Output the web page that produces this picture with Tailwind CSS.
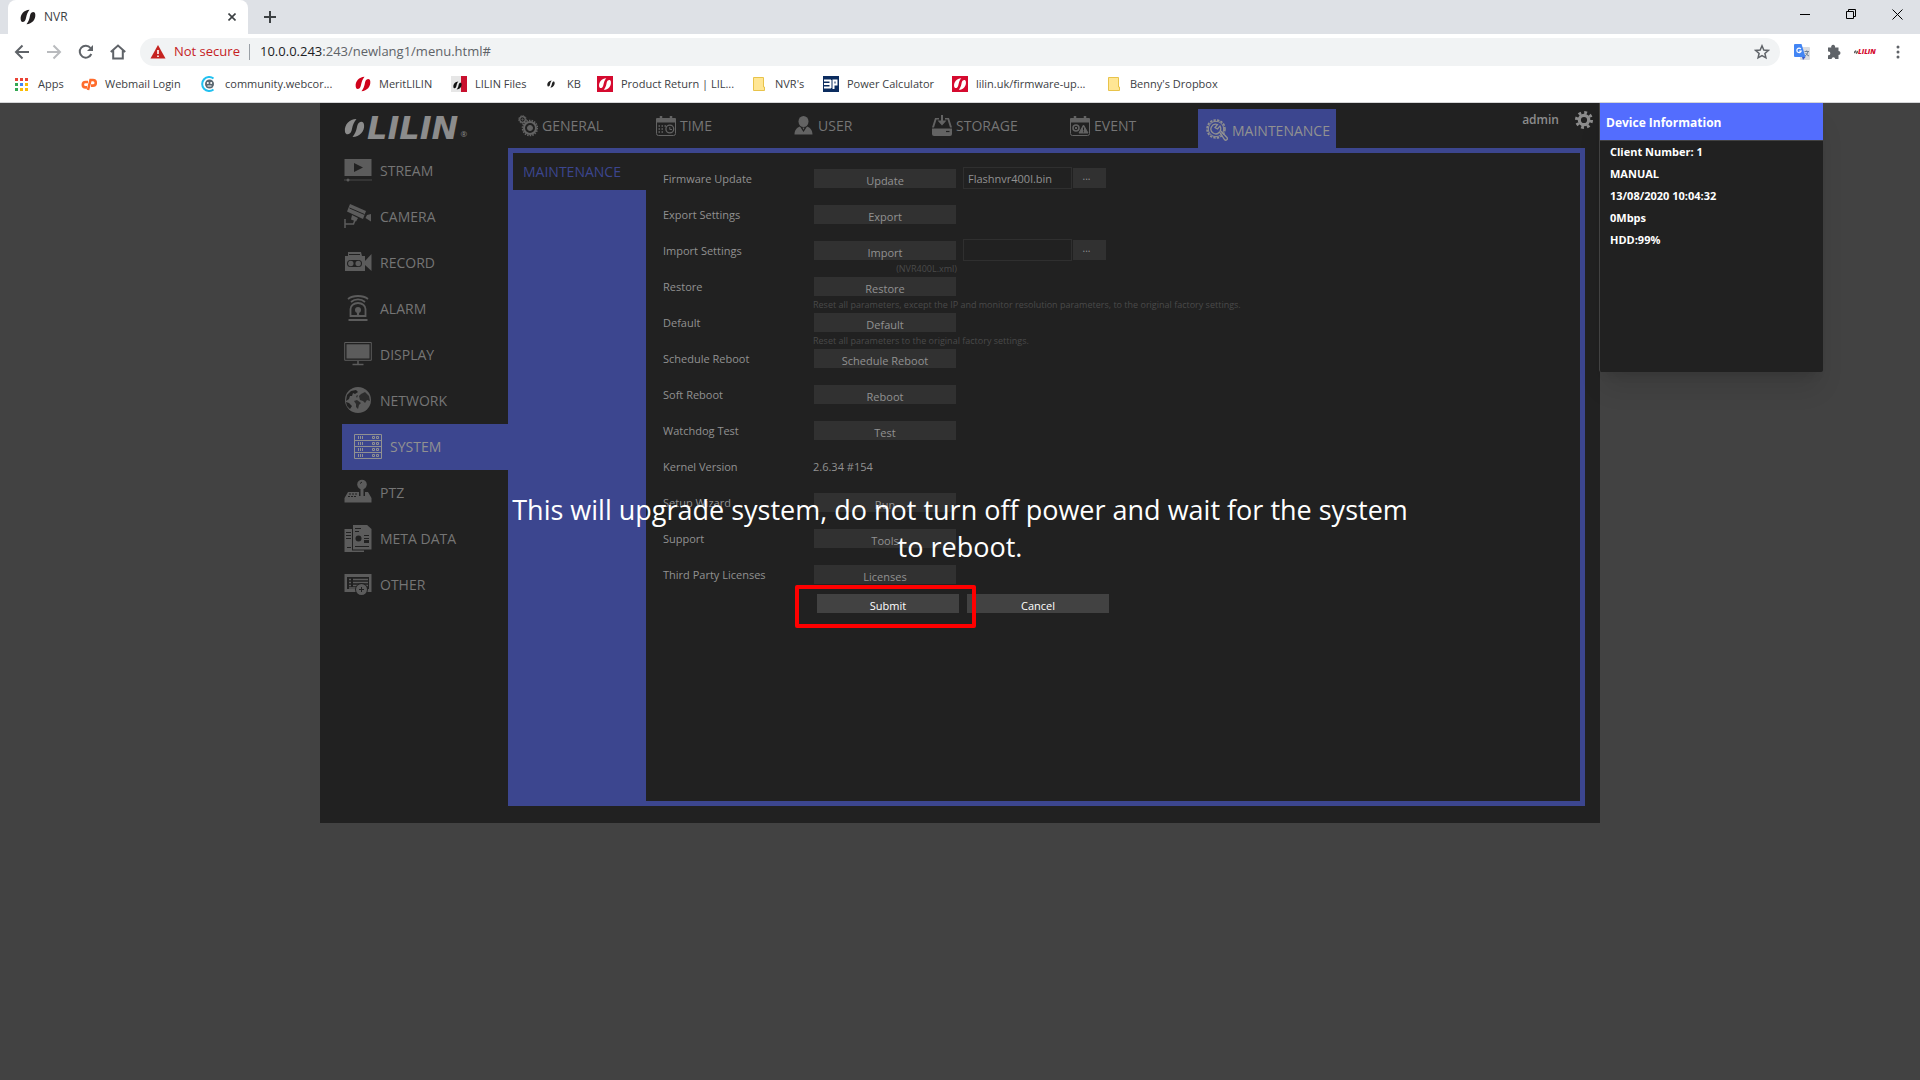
<!DOCTYPE html>
<html lang="en">
<head>
    <meta charset="UTF-8">
    <meta name="viewport" content="width=device-width, initial-scale=1.0">
    <title>NVR</title>

    <!-- Tailwind CSS -->
    <script src="https://cdn.jsdelivr.net/npm/@tailwindcss/browser@4"></script>
</head>
<body class="flex flex-col min-h-screen bg-[#424242] font-['Open_Sans',sans-serif] text-xs">

    <!-- Shared logo mark -->
    <svg class="hidden">
        <symbol id="swirl" viewBox="0 0 16 16">
            <path d="M9.5 .8C4 1 .2 5.500 .7 10.500C1 13.300 3 13.500 4.600 12.200C6.800 10.300 5.300 6 9.500 .8Z" />
            <path d="M6.500 15.200C12 15 15.800 10.500 15.300 5.500C15 2.700 13 2.500 11.400 3.800C9.200 5.700 10.700 10 6.500 15.200Z" />
        </symbol>
    </svg>

    <!-- Browser window -->
    <header class="bg-white text-[#3c4043] border-b border-[#d5d6d8]">
        <!-- Tab strip -->
        <div class="flex items-end h-[34px] pl-2 bg-[#dee1e6]">
            <div class="flex items-center w-60 h-[34px] px-3 bg-white rounded-t-lg">
                <svg class="w-4 h-4" fill="#231f20"><use href="#swirl" /></svg>
                <span class="ml-2 text-xs">NVR</span>
                <button class="ml-auto" aria-label="Close tab">
                    <svg class="w-2 h-2" viewBox="0 0 8 8" fill="none" stroke="#3c4043" stroke-width="1.6"><path d="M.5 .5L7.500 7.500M7.500 .5L.5 7.500" /></svg>
                </button>
            </div>
            <button class="flex items-center justify-center w-11 h-[34px]" aria-label="New tab">
                <svg class="w-3 h-3" viewBox="0 0 12 12" stroke="#3c4043" stroke-width="2"><path d="M6 0V12M0 6H12" /></svg>
            </button>
            <div class="flex items-center h-[28px] mb-1.5 ml-auto">
                <button class="flex justify-center w-[46px]" aria-label="Minimize">
                    <svg class="w-[10px] h-[11px]" viewBox="0 0 10 11" stroke="#000"><path d="M0 5.500H10" /></svg>
                </button>
                <button class="flex justify-center w-[46px]" aria-label="Restore">
                    <svg class="w-[10px] h-[11px]" viewBox="0 0 10 11" fill="none" stroke="#000"><path d="M.5 2.500H7.500V9.500H.5ZM2.500 2.500V.5H9.500V7.500H7.500" /></svg>
                </button>
                <button class="flex justify-center w-[46px]" aria-label="Close">
                    <svg class="w-[11px] h-[11px]" viewBox="0 0 11 11" stroke="#000"><path d="M.5 .5L10.500 10.500M10.500 .5L.5 10.500" /></svg>
                </button>
            </div>
        </div>

        <!-- Toolbar -->
        <div class="flex items-center h-9 px-3.5">
            <div class="flex items-center gap-4 w-[126px] shrink-0">
                <button aria-label="Back"><svg class="w-4 h-4" viewBox="0 0 16 16" fill="none" stroke="#5f6368" stroke-width="2"><path d="M15 8H2M8.500 1.500L2 8L8.500 14.500" /></svg></button>
                <button aria-label="Forward"><svg class="w-4 h-4" viewBox="0 0 16 16" fill="none" stroke="#b9bbbe" stroke-width="2"><path d="M1 8H14M7.500 1.500L14 8L7.500 14.500" /></svg></button>
                <button aria-label="Reload"><svg class="w-4 h-4" viewBox="0 0 16 16"><path d="M13.300 10A6 6 0 1 1 12.500 4" fill="none" stroke="#5f6368" stroke-width="2" /><path d="M15 1V7H9Z" fill="#5f6368" /></svg></button>
                <button aria-label="Home"><svg class="w-4 h-4" viewBox="0 0 16 16" fill="none" stroke="#5f6368" stroke-width="2"><path d="M.8 8L8 1.500L15.200 8M3.200 6.500V14.500H12.800V6.500" /></svg></button>
            </div>
            <div class="flex items-center grow h-7 px-2.5 bg-[#f1f3f4] rounded-full text-[13px]">
                <svg class="w-4 h-4" viewBox="0 0 16 16"><path d="M8 1L15.500 14.500H.5Z" fill="#c5221f" /><path d="M8 6V10M8 11.500V13" stroke="#fff" stroke-width="1.600" /></svg>
                <span class="w-[83px] pl-2 text-[#c5221f] whitespace-nowrap">Not secure</span>
                <span class="w-px h-4 mr-2.5 bg-[#9aa0a6]"></span>
                <span class="text-[#5f6368]"><span class="text-[#202124]">10.0.0.243</span>:243/newlang1/menu.html#</span>
                <button class="ml-auto" aria-label="Bookmark this page">
                    <svg class="w-4 h-4" viewBox="0 0 16 16" fill="none" stroke="#5f6368" stroke-width="1.500"><path d="M8 1.800L9.800 6L14.300 6.400L10.900 9.400L11.900 13.800L8 11.500L4.100 13.800L5.100 9.400L1.700 6.400L6.200 6Z" /></svg>
                </button>
            </div>
            <div class="flex items-center gap-4 pl-3.5">
                <svg class="w-4 h-4" viewBox="0 0 16 16"><rect x="6" y="3" width="10" height="13" rx="1" fill="#dadce0" /><path d="M1 0H7.500L11.500 13H1A1 1 0 0 1 0 12V1A1 1 0 0 1 1 0Z" fill="#4285f4" /><path d="M8 13H11.500L9 16Z" fill="#3a5bc7" /><path d="M6.800 5A2.200 2.200 0 1 0 7.200 7H5.200" fill="none" stroke="#fff" stroke-width="1.200" /><path d="M10.500 7.500H15M12.700 6.500V7.500M14 7.500C13.500 10 12 11.500 11 12M11.700 9C12.500 10.500 13.500 11.500 15 12" fill="none" stroke="#6b7f94" /></svg>
                <svg class="w-4 h-4" viewBox="0 0 16 16" fill="#5f6368"><path d="M2 3.500H5.300A2 2 0 1 1 9 3.500H12.500V7A2 2 0 1 1 12.500 11V15H9.200A1.800 1.800 0 1 0 5.600 15H2V11.200A1.900 1.900 0 1 0 2 7.500Z" /></svg>
                <span class="flex items-center w-6 -mx-1 text-[7px] font-extrabold italic text-[#d50a2f]"><svg class="w-1 h-1" fill="#333"><use href="#swirl" /></svg>LILIN</span>
                <button aria-label="Menu"><svg class="w-4 h-4" viewBox="0 0 16 16" fill="#5f6368"><circle cx="8" cy="3" r="1.500" /><circle cx="8" cy="8" r="1.500" /><circle cx="8" cy="13" r="1.500" /></svg></button>
            </div>
        </div>

        <!-- Bookmarks bar -->
        <nav class="flex items-center h-8 pl-3.5 pb-1 text-[11px] whitespace-nowrap">
            <a href="#" class="flex items-center gap-2 w-[67px]">
                <svg class="w-4 h-4" viewBox="0 0 16 16"><path d="M1 2H4V5H1ZM6 2H9V5H6ZM11 2H14V5H11Z" fill="#ea4335" /><path d="M1 7H4V10H1ZM1 12H4V15H1Z" fill="#34a853" /><path d="M6 7H9V10H6Z" fill="#4285f4" /><path d="M11 7H14V10H11ZM6 12H9V15H6ZM11 12H14V15H11Z" fill="#fbbc04" /></svg>
                Apps
            </a>
            <a href="#" class="flex items-center gap-2 w-[120px]">
                <svg class="w-4 h-4" viewBox="0 0 16 16" fill="none" stroke="#ff6c2c" stroke-width="2.600"><path d="M7 6H4.500A2.700 2.700 0 0 0 4.500 11.400H6M7 14L9.500 4H12A2.600 2.600 0 0 1 12 9.600H10" /></svg>
                Webmail Login
            </a>
            <a href="#" class="flex items-center gap-2 w-[154px]">
                <svg class="w-4 h-4" viewBox="0 0 16 16"><path d="M12.500 2.500A7 7 0 1 0 12.500 13.500" fill="none" stroke="#21c0f0" stroke-width="2" /><circle cx="8.500" cy="8" r="4.500" fill="#5b6770" /><circle cx="6.800" cy="7" r="1" fill="#fff" /><circle cx="10.200" cy="7" r="1" fill="#fff" /><path d="M6.500 10H10.500" stroke="#fff" /></svg>
                community.webcor...
            </a>
            <a href="#" class="flex items-center gap-2 w-24">
                <svg class="w-4 h-4" fill="#d0021b"><use href="#swirl" /></svg>
                MeritLILIN
            </a>
            <a href="#" class="flex items-center gap-2 w-[92px]">
                <svg class="w-4 h-4" viewBox="0 0 16 16"><rect width="16" height="16" fill="#e6e6e6" /><path d="M10 0H16V16H10Z" fill="#c8102e" /><use href="#swirl" x="2" y="5" width="9" height="9" fill="#111" /></svg>
                LILIN Files
            </a>
            <a href="#" class="flex items-center gap-2 w-[54px]">
                <svg class="w-4 h-4" viewBox="0 0 16 16"><use href="#swirl" x="4" y="4" width="8" height="8" fill="#222" /></svg>
                KB
            </a>
            <a href="#" class="flex items-center gap-2 w-[154px]">
                <svg class="w-4 h-4" viewBox="0 0 16 16"><rect width="16" height="16" fill="#d50a2f" /><use href="#swirl" x="1.500" y="1.500" width="13" height="13" fill="#fff" /></svg>
                Product Return | LIL...
            </a>
            <a href="#" class="flex items-center gap-2 w-[72px]">
                <svg class="w-4 h-4" viewBox="0 0 16 16"><path d="M2.500 1.500H12.500V11H13.500V14.500H2.500Z" fill="#ffe694" stroke="#e8c34a" /></svg>
                NVR's
            </a>
            <a href="#" class="flex items-center gap-2 w-[129px]">
                <svg class="w-4 h-4" viewBox="0 0 16 16"><rect width="16" height="16" fill="#0b2c5f" /><path d="M1 4.500H8M1 8H7M1 11.500H8M7.500 4V12M10.500 13V4.500H13.500V8.500H10.500" fill="none" stroke="#fff" stroke-width="2" /></svg>
                Power Calculator
            </a>
            <a href="#" class="flex items-center gap-2 w-[154px]">
                <svg class="w-4 h-4" viewBox="0 0 16 16"><rect width="16" height="16" fill="#d50a2f" /><use href="#swirl" x="1.500" y="1.500" width="13" height="13" fill="#fff" /></svg>
                lilin.uk/firmware-up...
            </a>
            <a href="#" class="flex items-center gap-2">
                <svg class="w-4 h-4" viewBox="0 0 16 16"><path d="M2.500 1.500H12.500V11H13.500V14.500H2.500Z" fill="#ffe694" stroke="#e8c34a" /></svg>
                Benny's Dropbox
            </a>
        </nav>
    </header>

    <!-- NVR menu -->
    <main class="relative w-full max-w-[1280px] min-h-[720px] mx-auto bg-[#212121] text-[#757575]">

        <!-- Logo, top menu and user -->
        <div class="flex h-[45px] pr-[7px]">
            <div class="flex items-center gap-0.5 w-[188px] h-[45px] pl-6 pt-1 text-[#8c8c8c] shrink-0">
                <svg class="w-[21px] h-5" viewBox="0 0 16 16" preserveAspectRatio="none" fill="currentColor"><use href="#swirl" /></svg>
                <span class="font-['DejaVu_Sans',sans-serif] text-[32px] leading-8 font-bold italic">LILIN</span>
                <span class="self-end pb-2 text-[8px]">®</span>
            </div>
            <nav class="flex items-start text-sm">
                <a href="#" class="flex items-center gap-1 w-[138px] h-[45px] pl-2.5">
                    <svg class="w-5 h-[22px]" viewBox="0 0 20 22" fill="none" stroke="#636363"><circle cx="4.500" cy="4.500" r="3.800" stroke-dasharray="1.600 .9" /><circle cx="4.500" cy="4.500" r="2.800" stroke-width="1.300" /><circle cx="4.500" cy="4.500" r=".6" /><circle cx="12" cy="13" r="7.500" stroke-dasharray="1.500 1.120" stroke-width="1.600" /><circle cx="12" cy="13" r="6" stroke-width="2" /><circle cx="12" cy="13" r="2.500" fill="#636363" /></svg>
                    GENERAL
                </a>
                <a href="#" class="flex items-center gap-1 w-[138px] h-[45px] pl-2.5">
                    <svg class="w-5 h-[22px]" viewBox="0 0 20 22" fill="none" stroke="#636363"><path d="M.5 3.500H19.500V18.500A2 2 0 0 1 17.500 20.500H2.500A2 2 0 0 1 .5 18.500Z" /><path d="M1 4H19V7H1Z" fill="#636363" /><path d="M5 1V5M15 1V5" stroke-width="2.500" /><path d="M2.500 11H4M5.500 11H7M2.500 14H4M5.500 14H7M2.500 17H4M5.500 17H7M8.500 11H10" stroke-width="1.600" /><circle cx="13.800" cy="14" r="3.900" stroke-width="1.300" /><path d="M13.800 12V14.500H16" /></svg>
                    TIME
                </a>
                <a href="#" class="flex items-center gap-1 w-[138px] h-[45px] pl-2.5">
                    <svg class="w-5 h-[22px]" viewBox="0 0 20 22" fill="#636363"><ellipse cx="9.500" cy="6.500" rx="5" ry="5.500" /><path d="M.5 19.500C.5 15 3 12.500 6 11.500L9.500 17L13 11.500C16 12.500 18.500 15 18.500 19.500Z" /><path d="M8.500 12.500H10.500L9.500 15Z" /></svg>
                    USER
                </a>
                <a href="#" class="flex items-center gap-1 w-[138px] h-[45px] pl-2.5">
                    <svg class="w-5 h-[22px]" viewBox="0 0 20 22" fill="#636363"><path d="M0 13.500H20V19A2 2 0 0 1 18 21H2A2 2 0 0 1 0 19Z" /><path d="M3 3H7V4.500H4.500L2 12.500H0ZM17 3H13V4.500H15.500L18 12.500H20Z" /><path d="M9 0H11V5.500H14.500L10 10.500L5.500 5.500H9Z" /><path d="M14 16.500H17.500" stroke="#212121" stroke-width="1.200" /></svg>
                    STORAGE
                </a>
                <a href="#" class="flex items-center gap-1 w-[128px] h-[45px] pl-2.5">
                    <svg class="w-5 h-[22px]" viewBox="0 0 20 22" fill="none" stroke="#636363"><path d="M.5 3.500H19.500V18.500A2 2 0 0 1 17.500 20.500H2.500A2 2 0 0 1 .5 18.500Z" /><path d="M1 4H19V7H1Z" fill="#636363" /><path d="M5 1V5M15 1V5" stroke-width="2.500" /><circle cx="6" cy="13" r="3" stroke-width="1.500" /><path d="M4.800 11.800L7.200 14.200M7.200 11.800L4.800 14.200" /><path d="M13.500 10L18 18H9Z" fill="#636363" /><path d="M13.500 12.500V15.500M13.500 16.300V17.300" stroke="#212121" /></svg>
                    EVENT
                </a>
                <a href="#" class="flex items-center gap-1 w-[138px] h-[39px] mt-1.5 ml-2.5 pl-2 pt-1 bg-[#3c468f] text-[#919191]">
                    <svg class="w-[22px] h-[23px]" viewBox="0 0 22 23" fill="none" stroke="#919191"><circle cx="10" cy="10" r="9" stroke-width="1.600" stroke-dasharray="2.400 1.200" /><circle cx="10" cy="10" r="7.700" stroke-width="1" /><path d="M11.500 5.500A4.800 4.800 0 1 0 13.500 13L18.500 20.500A1.500 1.500 0 0 0 21 18.500L14.300 11.500A4.800 4.800 0 0 0 14 7L11.500 10L9 8.500Z" stroke-width="1.300" /></svg>
                    MAINTENANCE
                </a>
            </nav>
            <div class="flex items-center gap-4 h-[34px] ml-auto text-[#8c8c8c] font-semibold">
                <span>admin</span>
                <button aria-label="Settings">
                    <svg class="w-[18px] h-[18px]" viewBox="0 0 18 18" fill="none" stroke="#8c8c8c"><circle cx="9" cy="9" r="7.500" stroke-width="3" stroke-dasharray="2.800 3.090" /><circle cx="9" cy="9" r="4.700" stroke-width="3.200" /></svg>
                </button>
            </div>
        </div>

        <div class="flex pr-[15px] pb-[17px]">
            <!-- Sidebar -->
            <nav class="w-[188px] pl-[22px] text-sm shrink-0">
                <a href="#" class="flex items-center gap-2 h-[46px] pl-0.5">
                    <svg class="w-7 h-7" viewBox="0 0 28 28" fill="#5c5c5c"><path d="M.5 2H27.500V19H.5Z" /><path d="M10 6V15L19 10.500Z" fill="#212121" /><path d="M0 23H28" stroke="#4a4a4a" /><circle cx="4" cy="23" r="1.500" /></svg>
                    STREAM
                </a>
                <a href="#" class="flex items-center gap-2 h-[46px] pl-0.5">
                    <svg class="w-7 h-7" viewBox="0 0 28 28" fill="#5c5c5c"><path d="M6 1L22 8L19 16L3 8.500Z" /><path d="M5.500 5L20.500 11.500" stroke="#212121" /><path d="M23 12L27 11V18.500L21.500 15Z" /><path d="M8 12L14 15L12 18.500L7 16.500Z" /><path d="M1 16V25M1 21H9.500L11 17" fill="none" stroke="#5c5c5c" stroke-width="1.500" /></svg>
                    CAMERA
                </a>
                <a href="#" class="flex items-center gap-2 h-[46px] pl-0.5">
                    <svg class="w-7 h-7" viewBox="0 0 28 28" fill="#5c5c5c"><path d="M1 7H4V3H17L18 7H21V22H1Z" /><path d="M5 5.500H16" stroke="#212121" /><path d="M21 12L27.500 5V22L21 16Z" /><rect x="3" y="11" width="15" height="7" rx="3.500" fill="#212121" /><circle cx="6.800" cy="14.500" r="2.700" /><circle cx="14.200" cy="14.500" r="2.700" /></svg>
                    RECORD
                </a>
                <a href="#" class="flex items-center gap-2 h-[46px] pl-0.5">
                    <svg class="w-7 h-7" viewBox="0 0 28 28" fill="none" stroke="#5c5c5c" stroke-width="1.800"><path d="M4 4C9 0 19 0 24 4M7 7C11 3.500 17 3.500 21 7" /><path d="M6.500 21V14A7.500 6 0 0 1 21.500 14V21Z" /><circle cx="14" cy="15" r="3" fill="#5c5c5c" stroke="none" /><path d="M14 16V21M4.500 25H23.500" stroke-width="2.200" /></svg>
                    ALARM
                </a>
                <a href="#" class="flex items-center gap-2 h-[46px] pl-0.5">
                    <svg class="w-7 h-7" viewBox="0 0 28 28"><path d="M.7 1.500H27.300V19.300H.7Z" fill="none" stroke="#5c5c5c" /><path d="M2.500 3.300H25.500V17.500H2.500Z" fill="#5c5c5c" /><path d="M14 20V23M8.500 23.500H19.500" stroke="#5c5c5c" stroke-width="1.500" /></svg>
                    DISPLAY
                </a>
                <a href="#" class="flex items-center gap-2 h-[46px] pl-0.5">
                    <svg class="w-7 h-7" viewBox="0 0 28 28"><circle cx="14" cy="13" r="13" fill="#5c5c5c" /><path d="M3 8L7 4L12 3L14 5L11 7L9 6L8 9L6 9L5 12L2 14ZM2 15L5 16L8 19L6 22L3 19Z" fill="#212121" /><path d="M15 9L17 7L21 5L25 9L26 14L23 13L21 16L19 14L16 13ZM10 14L13 13L17 16L15 18L14 22L12 20L12 17ZM12 9L14 8L13 11Z" fill="#212121" opacity=".8" /></svg>
                    NETWORK
                </a>
                <a href="#" class="flex items-center gap-2 h-[46px] pl-3 bg-[#3c468f] text-[#919191]">
                    <svg class="w-7 h-[26px]" viewBox="0 0 28 26" fill="none" stroke="#919191"><path d="M.5 .5H27.500V24.500H.5ZM.5 6.500H27.500M.5 12.500H27.500M.5 18.500H27.500" /><path d="M4.500 2V5M6.500 2V5M8.500 2V5M4.500 8V11M6.500 8V11M8.500 8V11M4.500 14V17M6.500 14V17M8.500 14V17M4.500 20V23M6.500 20V23M8.500 20V23" /><path d="M18.500 2.500H20.500V4.500H18.500ZM22.500 2.500H24.500V4.500H22.500ZM18.500 8.500H20.500V10.500H18.500ZM22.500 8.500H24.500V10.500H22.500ZM18.500 14.500H20.500V16.500H18.500ZM22.500 14.500H24.500V16.500H22.500ZM18.500 20.500H20.500V22.500H18.500ZM22.500 20.500H24.500V22.500H22.500Z" /></svg>
                    SYSTEM
                </a>
                <a href="#" class="flex items-center gap-2 h-[46px] pl-0.5">
                    <svg class="w-7 h-7" viewBox="0 0 28 28" fill="#5c5c5c"><circle cx="18" cy="5.500" r="4.800" /><path d="M16.500 8H19.500V17H16.500Z" /><path d="M4 13H15V17H21V13H24L27.500 19V23.500H.5V19Z" /><path d="M5 15H13M4 17.500H13" stroke="#212121" stroke-dasharray="2 1" /><path d="M16 4.500L18 3" stroke="#212121" /></svg>
                    PTZ
                </a>
                <a href="#" class="flex items-center gap-2 h-[46px] pl-0.5">
                    <svg class="w-7 h-7" viewBox="0 0 28 28" fill="#5c5c5c"><path d="M.5 4H8V25.500H20V27H.5Z" /><path d="M9 -1H22L27.500 4V24.500H9Z" /><path d="M2 7.500H7M2 10.500H7M2 13.500H7M3 22.500H7M11 3.500H17M11 6.500H15M11 21.500H25M20 10.500H25M20 13.500H25" stroke="#212121" /><path d="M20 15H25V18H20Z" fill="#212121" /><circle cx="14.500" cy="13.500" r="3" fill="#212121" /></svg>
                    META DATA
                </a>
                <a href="#" class="flex items-center gap-2 h-[46px] pl-0.5">
                    <svg class="w-7 h-7" viewBox="0 0 28 28" fill="#5c5c5c"><path d="M.5 3H27.500V21H.5Z" /><path d="M3 6H25V18H3Z" fill="#212121" /><path d="M5 8.500H7M9 8.500H24M5 11.500H7M9 11.500H24M5 14.500H7M9 14.500H24M5 17H15" stroke="#5c5c5c" stroke-width="1.500" /><circle cx="17.500" cy="18.500" r="6.500" fill="#212121" /><circle cx="17.500" cy="18.500" r="5.500" /><path d="M17.500 16V21M15 18.500H20" stroke="#212121" /></svg>
                    OTHER
                </a>
            </nav>

            <!-- Maintenance page -->
            <section class="flex grow min-h-[658px] border-5 border-[#3c468f]">
                <nav class="w-[133px] bg-[#3c468f] shrink-0">
                    <a href="#" class="flex items-center h-[37px] pl-2.5 bg-[#212121] text-[#3c468f] text-sm">MAINTENANCE</a>
                </nav>
                <form class="grow pt-3.5 pl-[17px] text-[#919191] text-[11px]">
                    <div class="flex h-9">
                        <label for="update" class="w-[150px] leading-6">Firmware Update</label>
                        <div class="flex items-center h-[22px]">
                            <button type="button" id="update" class="w-[143px] h-[19px] pt-1 leading-[15px] border-l border-[#212121] bg-[#313131]">Update</button>
                            <input type="text" aria-label="Firmware file" value="Flashnvr400l.bin" class="w-[109px] h-[22px] ml-[7px] px-1 border border-[#2f2f2f]">
                            <button type="button" aria-label="Browse firmware file" class="w-[33px] h-5 ml-px pr-1.5 pb-1 leading-3 bg-[#313131] text-[10px]">...</button>
                        </div>
                    </div>
                    <div class="flex h-9">
                        <label for="export" class="w-[150px] leading-6">Export Settings</label>
                        <div class="flex items-center h-[22px]">
                            <button type="button" id="export" class="w-[143px] h-[19px] pt-1 leading-[15px] border-l border-[#212121] bg-[#313131]">Export</button>
                        </div>
                    </div>
                    <div class="flex h-9">
                        <label for="import" class="w-[150px] leading-6">Import Settings</label>
                        <div>
                            <div class="flex items-center h-[22px]">
                                <button type="button" id="import" class="w-[143px] h-[19px] pt-1 leading-[15px] border-l border-[#212121] bg-[#313131]">Import</button>
                                <input type="text" aria-label="Settings file" class="w-[109px] h-[22px] ml-[7px] px-1 border border-[#2f2f2f]">
                                <button type="button" aria-label="Browse settings file" class="w-[33px] h-5 ml-px pr-1.5 pb-1 leading-3 bg-[#313131] text-[10px]">...</button>
                            </div>
                            <p class="w-36 text-right text-[9px] leading-4 text-[#4a4a4a]">(NVR400L.xml)</p>
                        </div>
                    </div>
                    <div class="flex h-9">
                        <label for="restore" class="w-[150px] leading-6">Restore</label>
                        <div>
                            <div class="flex items-center h-[22px]">
                                <button type="button" id="restore" class="w-[143px] h-[19px] pt-1 leading-[15px] border-l border-[#212121] bg-[#313131]">Restore</button>
                            </div>
                            <p class="text-[9px] leading-4 text-[#4a4a4a]">Reset all parameters, except the IP and monitor resolution parameters, to the original factory settings.</p>
                        </div>
                    </div>
                    <div class="flex h-9">
                        <label for="default" class="w-[150px] leading-6">Default</label>
                        <div>
                            <div class="flex items-center h-[22px]">
                                <button type="button" id="default" class="w-[143px] h-[19px] pt-1 leading-[15px] border-l border-[#212121] bg-[#313131]">Default</button>
                            </div>
                            <p class="text-[9px] leading-4 text-[#4a4a4a]">Reset all parameters to the original factory settings.</p>
                        </div>
                    </div>
                    <div class="flex h-9">
                        <label for="schedule" class="w-[150px] leading-6">Schedule Reboot</label>
                        <div class="flex items-center h-[22px]">
                            <button type="button" id="schedule" class="w-[143px] h-[19px] pt-1 leading-[15px] border-l border-[#212121] bg-[#313131]">Schedule Reboot</button>
                        </div>
                    </div>
                    <div class="flex h-9">
                        <label for="reboot" class="w-[150px] leading-6">Soft Reboot</label>
                        <div class="flex items-center h-[22px]">
                            <button type="button" id="reboot" class="w-[143px] h-[19px] pt-1 leading-[15px] border-l border-[#212121] bg-[#313131]">Reboot</button>
                        </div>
                    </div>
                    <div class="flex h-9">
                        <label for="watchdog" class="w-[150px] leading-6">Watchdog Test</label>
                        <div class="flex items-center h-[22px]">
                            <button type="button" id="watchdog" class="w-[143px] h-[19px] pt-1 leading-[15px] border-l border-[#212121] bg-[#313131]">Test</button>
                        </div>
                    </div>
                    <div class="flex h-9">
                        <span class="w-[150px] leading-6">Kernel Version</span>
                        <span class="leading-6">2.6.34 #154</span>
                    </div>
                    <div class="flex h-9">
                        <label for="wizard" class="w-[150px] leading-6">Setup Wizard</label>
                        <div class="flex items-center h-[22px]">
                            <button type="button" id="wizard" class="w-[143px] h-[19px] pt-1 leading-[15px] border-l border-[#212121] bg-[#313131]">Run</button>
                        </div>
                    </div>
                    <div class="flex h-9">
                        <label for="support" class="w-[150px] leading-6">Support</label>
                        <div class="flex items-center h-[22px]">
                            <button type="button" id="support" class="w-[143px] h-[19px] pt-1 leading-[15px] border-l border-[#212121] bg-[#313131]">Tools</button>
                        </div>
                    </div>
                    <div class="flex h-9">
                        <label for="licenses" class="w-[150px] leading-6">Third Party Licenses</label>
                        <div class="flex items-center h-[22px]">
                            <button type="button" id="licenses" class="w-[143px] h-[19px] pt-1 leading-[15px] border-l border-[#212121] bg-[#313131]">Licenses</button>
                        </div>
                    </div>
                </form>
            </section>
        </div>

        <!-- Upgrade dialog -->
        <div role="dialog" aria-labelledby="message" class="absolute inset-x-0 top-[388px] text-white">
            <p id="message" class="max-w-[900px] mx-auto text-center text-[27px] leading-[37px]">This will upgrade system, do not turn off power and wait for the system to reboot.</p>
            <div class="flex justify-center gap-2 mt-[29px] pl-1.5 text-[11px]">
                <div class="relative">
                    <button class="block w-[142px] h-[19px] pt-1 leading-[15px] bg-[#424242]">Submit</button>
                    <span class="absolute -top-[9px] -bottom-[15px] -left-[22px] -right-[17px] z-10 border-4 border-[#ff0000] rounded-xs pointer-events-none"></span>
                </div>
                <button class="block w-[142px] h-[19px] pt-1 leading-[15px] bg-[#424242]">Cancel</button>
            </div>
        </div>

        <!-- Device information -->
        <aside class="absolute top-0 left-full w-[224px] h-[269px] -ml-px bg-[#212121] border-l border-[#424242] rounded-b-xs shadow-xl text-white font-bold">
            <h2 class="h-[38px] pl-1.5 leading-10 bg-[#536dfe] border-b border-[#424242] text-xs">Device Information</h2>
            <ul class="pl-2.5 text-[11px] leading-[22px]">
                <li>Client Number: 1</li>
                <li>MANUAL</li>
                <li>13/08/2020 10:04:32</li>
                <li>0Mbps</li>
                <li>HDD:99%</li>
            </ul>
        </aside>
    </main>
</body>
</html>
